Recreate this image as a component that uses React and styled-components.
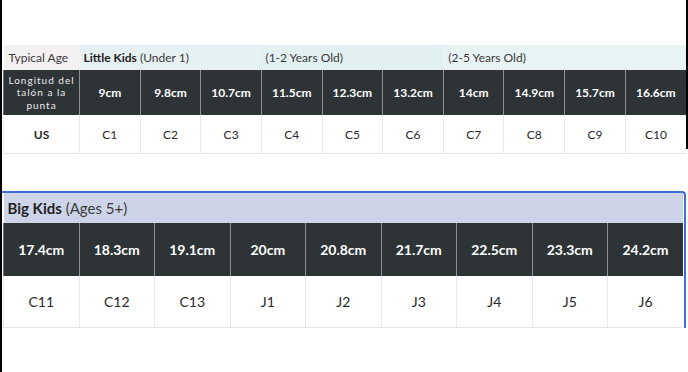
import React from "react";
import styled, { createGlobalStyle } from "styled-components";

const Global = createGlobalStyle`
  html, body { margin: 0; padding: 0; background: #fff; }
  body { font-family: Lato, "Open Sans", sans-serif; color: #2c2c2c; }
`;

const Page = styled.div`
  width: 688px;
  height: 372px;
  box-sizing: border-box;
  border-left: 2px solid #000;
  overflow: hidden;
`;

const TopSection = styled.section`
  box-sizing: border-box;
  height: 149px;
  padding-top: 45px;
  border-right: 2px solid #000;
  overflow: visible;
`;

const Table = styled.table`
  border-collapse: collapse;
  table-layout: fixed;
  width: ${(p) => p.$width}px;
  margin-left: 1px;
`;

const GroupCell = styled.th`
  height: ${(p) => p.$h}px;
  padding: 0 0 0 ${(p) => p.$pad}px;
  text-align: left;
  font-weight: 400;
  font-size: ${(p) => p.$size}px;
  color: #3a3a3a;
  background: ${(p) => p.$bg};
  white-space: nowrap;
  b { font-weight: 700; color: #222; }
`;

const DarkCell = styled.td`
  height: ${(p) => p.$h}px;
  background: #2e3336;
  color: #fff;
  font-weight: 700;
  font-size: ${(p) => p.$size}px;
  text-align: center;
  padding: 0;
  border-left: 1px solid #8d9193;
  &:first-child { border-left: 1px solid #6a6f72; }
`;

const LabelCell = styled(DarkCell)`
  font-weight: 400;
  font-size: 10px;
  letter-spacing: 1px;
  line-height: 12.5px;
  color: #ececec;
`;

const SizeCell = styled.td`
  height: ${(p) => p.$h}px;
  text-align: center;
  padding: 0;
  font-size: ${(p) => p.$size}px;
  font-weight: ${(p) => (p.$bold ? 700 : 400)};
  color: #2a2a2a;
  border-left: 1px solid #e9e9e9;
  border-bottom: 1px solid #e4e4e4;
  &:first-child { border-left: 1px solid #eee; }
`;

const BottomSection = styled.section`
  padding-top: 42px;
`;

const Outlined = styled.div`
  width: 682px;
  border-top: 2px solid #3f70d6;
  border-right: 2px solid #3f70d6;
  border-top-right-radius: 4px;
  overflow: hidden;
`;

const BigTable = styled.table`
  border-collapse: collapse;
  table-layout: fixed;
  width: 680px;
  margin-left: 1px;
`;

const little = ["9cm", "9.8cm", "10.7cm", "11.5cm", "12.3cm", "13.2cm", "14cm", "14.9cm", "15.7cm", "16.6cm"];
const littleUS = ["C1", "C2", "C3", "C4", "C5", "C6", "C7", "C8", "C9", "C10"];
const big = ["17.4cm", "18.3cm", "19.1cm", "20cm", "20.8cm", "21.7cm", "22.5cm", "23.3cm", "24.2cm"];
const bigUS = ["C11", "C12", "C13", "J1", "J2", "J3", "J4", "J5", "J6"];

export default function App() {
  return (
    <>
      <Global />
      <Page>
        <TopSection>
          <Table $width={683}>
            <colgroup>
              <col style={{ width: 76 }} />
              {little.map((v) => (
                <col key={v} />
              ))}
            </colgroup>
            <thead>
              <tr>
                <GroupCell $h={25} $pad={5} $size={12} $bg="#f4f1f3">Typical Age</GroupCell>
                <GroupCell colSpan={3} $h={25} $pad={4} $size={12} $bg="#e6f1f3">
                  <b>Little Kids</b> (Under 1)
                </GroupCell>
                <GroupCell colSpan={3} $h={25} $pad={4} $size={12} $bg="#e3f0f1">(1-2 Years Old)</GroupCell>
                <GroupCell colSpan={4} $h={25} $pad={5} $size={12} $bg="#e8f3f4">(2-5 Years Old)</GroupCell>
              </tr>
            </thead>
            <tbody>
              <tr>
                <LabelCell $h={45}>
                  Longitud del
                  <br />
                  talón a la
                  <br />
                  punta
                </LabelCell>
                {little.map((v) => (
                  <DarkCell key={v} $h={45} $size={12}>{v}</DarkCell>
                ))}
              </tr>
              <tr>
                <SizeCell $h={38} $size={12} $bold>US</SizeCell>
                {littleUS.map((v) => (
                  <SizeCell key={v} $h={38} $size={12}>{v}</SizeCell>
                ))}
              </tr>
            </tbody>
          </Table>
        </TopSection>
        <BottomSection>
          <Outlined>
            <BigTable>
              <thead>
                <tr>
                  <GroupCell colSpan={9} $h={30} $pad={4} $size={15} $bg="#ced4e7">
                    <b>Big Kids</b> (Ages 5+)
                  </GroupCell>
                </tr>
              </thead>
              <tbody>
                <tr>
                  {big.map((v) => (
                    <DarkCell key={v} $h={53} $size={14}>{v}</DarkCell>
                  ))}
                </tr>
                <tr>
                  {bigUS.map((v) => (
                    <SizeCell key={v} $h={51} $size={14}>{v}</SizeCell>
                  ))}
                </tr>
              </tbody>
            </BigTable>
          </Outlined>
        </BottomSection>
      </Page>
    </>
  );
}
